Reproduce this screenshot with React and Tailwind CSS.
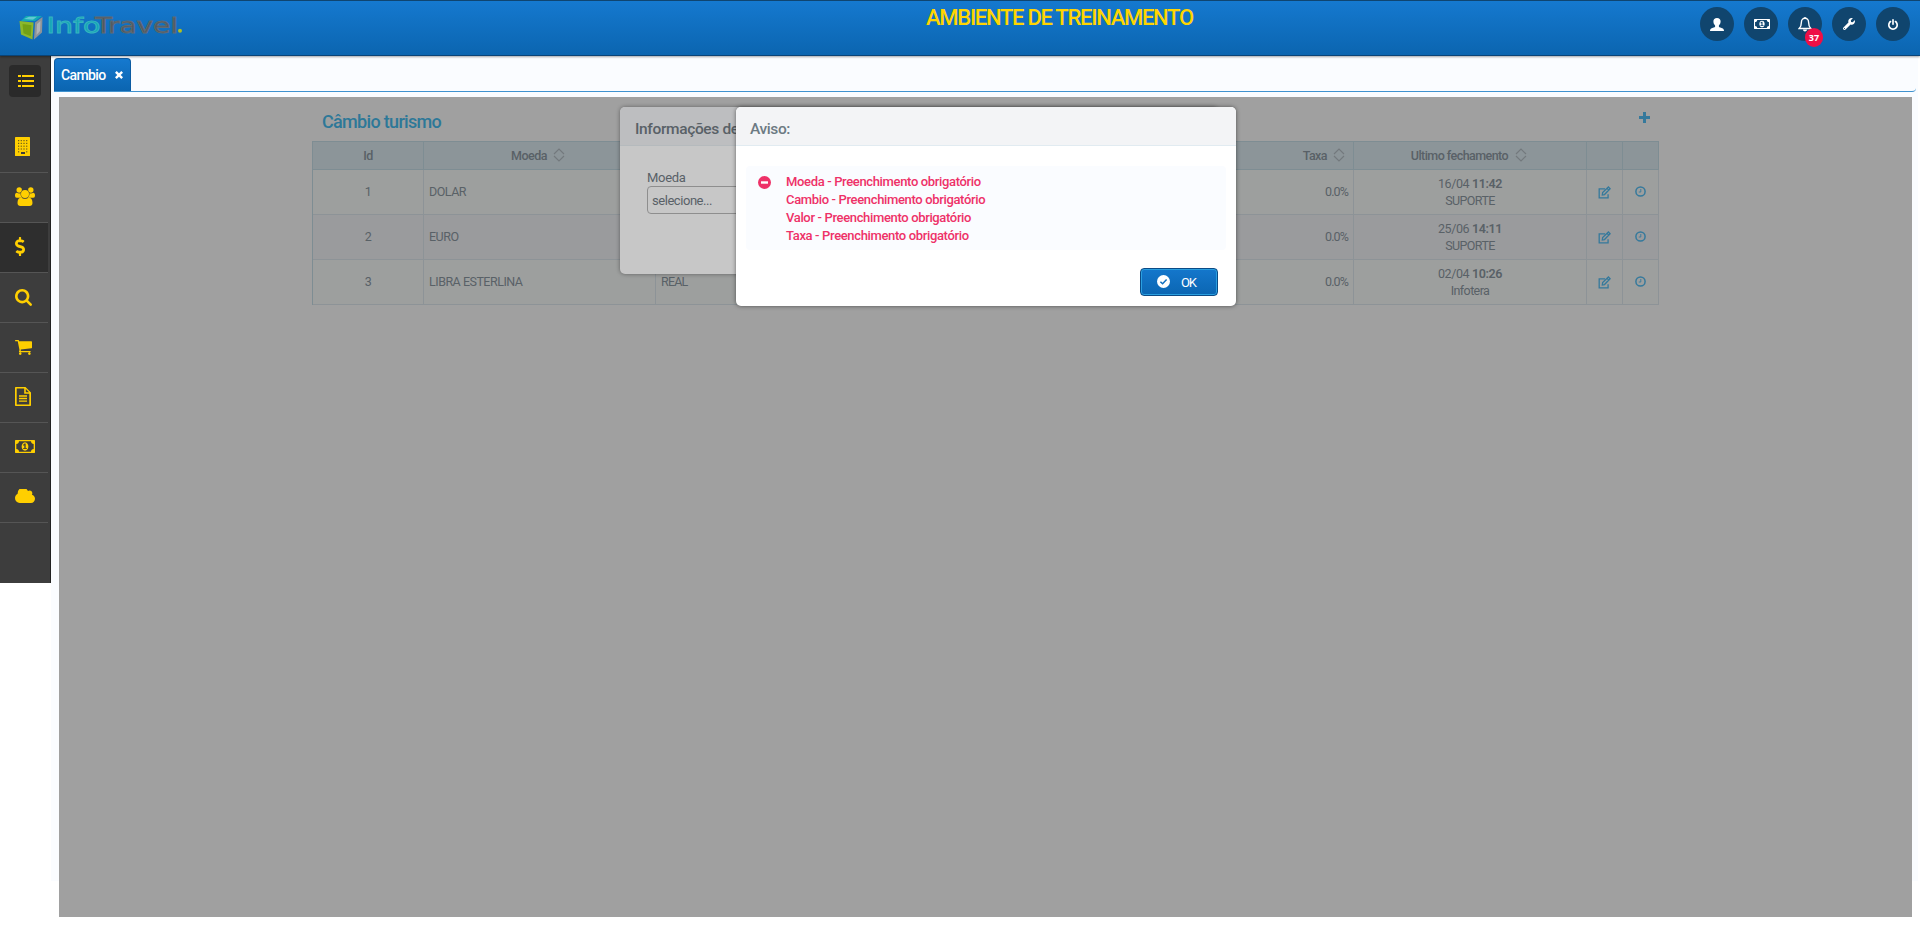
import React from "react";
import { FaDollarSign, FaWrench } from "react-icons/fa";

function Svg({ box, className, children, ...rest }) {
  return (
    <svg viewBox={box} className={className} fill="currentColor" preserveAspectRatio="none" {...rest}>
      {children}
    </svg>
  );
}

const MONEY =
  "M768 1152h384v-96h-128v-448h-114l-148 137 77 80q42-37 55-57h2v288h-128v96zm512-256q0 70-21 142t-59.5 134-101.5 101-138 39-138-39-101.5-101-59.5-134-21-142 21-142 59.5-134 101.5-101 138-39 138 39 101.5 101 59.5 134 21 142zm512 256v-512q-106 0-181-75t-75-181h-1152q0 106-75 181t-181 75v512q106 0 181 75t75 181h1152q0-106 75-181t181-75zm128-832v1152q0 26-19 45t-45 19h-1792q-26 0-45-19t-19-45v-1152q0-26 19-45t45-19h1792q26 0 45 19t19 45z";
const SEARCH =
  "M1216 832q0-185-131.5-316.5t-316.5-131.5-316.5 131.5-131.5 316.5 131.5 316.5 316.5 131.5 316.5-131.5 131.5-316.5zm512 832q0 52-38 90t-90 38q-54 0-90-38l-343-342q-179 124-399 124-143 0-273.5-55.5t-225-150-150-225-55.500-273.500 55.500-273.500 150-225 225-150 273.500-55.500 273.500 55.500 225 150 150 225 55.500 273.500q0 220-124 399l343 343q37 37 37 90z";
const CART =
  "M704 1536q0 52-38 90t-90 38-90-38-38-90 38-90 90-38 90 38 38 90zm896 0q0 52-38 90t-90 38-90-38-38-90 38-90 90-38 90 38 38 90zm128-1088v512q0 24-16.5 42.5t-40.5 21.5l-1044 122q13 60 13 70 0 16-24 64h920q26 0 45 19t19 45-19 45-45 19h-1024q-26 0-45-19t-19-45q0-11 8-31.5t16-36 21.5-40 15.5-29.5l-177-823h-204q-26 0-45-19t-19-45 19-45 45-19h256q16 0 28.5 6.5t19.5 15.5 13 24.5 8 26 5.5 29.5 4.5 26h1201q26 0 45 19t19 45z";
const CLOUD =
  "M1984 1152q0 159-112.5 271.5t-271.5 112.5h-1088q-185 0-316.5-131.5t-131.5-316.5q0-132 71-241.5t187-163.5q-2-28-2-43 0-212 150-362t362-150q158 0 286.5 88t187.5 230q70-62 166-62 106 0 181 75t75 181q0 75-41 138 129 30 213 134.5t84 239.5z";
const POWER =
  "M1664 896q0 156-61 298t-164 245-245 164-298 61-298-61-245-164-164-245-61-298q0-182 80.5-343t226.5-270q43-32 95.5-25t83.5 50q32 42 24.5 94.5t-49.5 84.5q-98 74-151.5 181t-53.5 228q0 104 40.5 198.5t109.5 163.5 163.5 109.5 198.5 40.5 198.5-40.5 163.5-109.5 109.5-163.5 40.5-198.5q0-121-53.5-228t-151.5-181q-42-32-49.5-84.5t24.5-94.5q31-43 84-50t95 25q146 109 226.5 270t80.5 343zm-640-768v640q0 52-38 90t-90 38-90-38-38-90v-640q0-52 38-90t90-38 90 38 38 90z";

function Building() {
  const dots = [];
  for (let r = 0; r < 5; r++) for (let c = 0; c < 4; c++) if (!(r === 4 && (c === 1 || c === 2))) dots.push([3 + c * 2.7, 3 + r * 2.8]);
  return (
    <Svg box="0 0 15 19" className="h-[19px] w-[15px]">
      <rect width="15" height="19" rx="0.6" />
      {dots.map(([x, y]) => (
        <rect key={x + "-" + y} x={x} y={y} width="1.2" height="1.2" fill="#6b5c1c" />
      ))}
      <rect x="6" y="15" width="4" height="2" fill="#3d3d3d" />
    </Svg>
  );
}

function Group() {
  return (
    <Svg box="0 0 20 19" className="h-[19px] w-[20px]">
      <circle cx="4.2" cy="3" r="2.7" />
      <circle cx="15.8" cy="3" r="2.7" />
      <path d="M0 8.2c0-1.700.8-2.600 1.900-2.500 1.300 1 2.900 1 4 .3.1 2 .5 3.400 1.500 4.700H1.700C.6 10.700 0 9.900 0 8.200z" />
      <path d="M20 8.200c0-1.700-.8-2.600-1.900-2.500-1.300 1-2.900 1-4 .3-.1 2-.5 3.400-1.500 4.700h5.700c1.100 0 1.700-.8 1.700-2.500z" />
      <circle cx="10" cy="6.900" r="4.500" fill="#3d3d3d" />
      <circle cx="10" cy="6.900" r="4" />
      <path d="M2.500 16c0-3.400 1.300-5.600 3.700-5.600 1.100.9 2.300 1.400 3.800 1.400s2.700-.5 3.800-1.400c2.400 0 3.700 2.200 3.700 5.600 0 1.900-1.200 3-2.900 3H5.400c-1.700 0-2.900-1.100-2.900-3z" />
    </Svg>
  );
}

function Doc() {
  return (
    <Svg box="0 0 16 19" className="h-[19px] w-[16px]">
      <path fillRule="evenodd" d="M1 0h9.500L16 5.500V18c0 .6-.4 1-1 1H1c-.6 0-1-.4-1-1V1c0-.6.4-1 1-1zm.7 1.600v15.800h12.600V6.800H9.200V1.600zm9.100.4v3.200H14z" />
      <path d="M4 8.200h8v1.500H4zM4 10.800h8v1.500H4zM4 13.400h8v1.400H4z" />
    </Svg>
  );
}

const MENU = [
  { id: "empresa", icon: <Building /> },
  { id: "clientes", icon: <Group /> },
  { id: "cambio", icon: <FaDollarSign className="mb-[1px] h-[19px] w-[10px]" preserveAspectRatio="none" />, active: true },
  { id: "busca", icon: <Svg box="64 128 1664 1664" className="mt-[1px] h-[17px] w-[17px]"><path d={SEARCH} /></Svg> },
  { id: "carrinho", icon: <Svg box="64 256 1664 1408" className="mt-[1px] h-[15px] w-[17px]"><path d={CART} /></Svg> },
  { id: "documento", icon: <Doc /> },
  { id: "financeiro", icon: <Svg box="0 256 1920 1280" className="h-[13px] w-[20px]"><path d={MONEY} /></Svg> },
  { id: "nuvem", icon: <Svg box="64 256 1920 1280" className="mb-[2px] h-[14px] w-[20px]"><path d={CLOUD} /></Svg> },
];

function Sidebar() {
  return (
    <aside className="h-[527px] w-[51px] shrink-0 border-r border-[#222] bg-[#3d3d3d] text-[#ffcf00]">
      <div className="pt-[9px] pl-[9px]">
        <button className="flex h-8 w-8 items-center justify-center rounded bg-[#2a2a2a] pl-[1px]">
          <Svg box="0 0 16 12" className="h-[12px] w-[16px]">
            <path d="M0 0h3v2H0zM4 0h12v2H4zM0 5h3v2H0zM4 5h12v2H4zM0 10h3v2H0zM4 10h12v2H4z" />
          </Svg>
        </button>
      </div>
      <nav className="mt-[26px] w-12">
        {MENU.map((m) => (
          <div
            key={m.id}
            className={
              "flex h-[50px] items-center border-b border-[#555] pb-[2px] pl-[15px] " + (m.active ? "bg-[#2e2e2e]" : "")
            }
          >
            {m.icon}
          </div>
        ))}
      </nav>
    </aside>
  );
}

function Logo() {
  return (
    <svg viewBox="0 0 170 32" className="h-8 w-[170px] overflow-visible">
      <path d="M7 1h16l-7 5H2z" fill="#12a9b4" />
      <path d="M5 4l5-2.200h8l-4 3z" fill="#62c9d2" />
      <path d="M0.500 6L14.500 7.500 13.500 24.500 2 19.500z" fill="#8cb82b" />
      <path d="M3.500 9l9 1.200-.7 11-7.300-3z" fill="#72a015" />
      <path d="M16 7.500L23.500 2 23 17.500 15 24.500z" fill="#8e9398" />
      <path d="M18 9l3.500-3-.5 10-3.500 4z" fill="#b0b4b8" />
      <text x="27.500" y="17.500" fontFamily="'DejaVu Sans', sans-serif" fontSize="21.500" fill="#12a5b5" stroke="#35b3bf" strokeWidth="0.900" textLength="54" lengthAdjust="spacingAndGlyphs">
        Info
      </text>
      <text x="76" y="17.500" fontFamily="'DejaVu Sans', sans-serif" fontSize="21.500" fill="#50565c" stroke="#5f6b75" strokeWidth="0.900" textLength="83" lengthAdjust="spacingAndGlyphs">
        Travel
      </text>
      <circle cx="161" cy="15.700" r="2" fill="#b0c020" />
    </svg>
  );
}

function RoundButton({ children }) {
  return (
    <button className="relative flex h-[34px] w-[34px] items-center justify-center rounded-full bg-[#10456e] text-white">
      {children}
    </button>
  );
}

function Header() {
  return (
    <header className="relative z-10 flex h-[56px] justify-between border-t border-b border-t-[#0f4570] border-b-[#0a4478] bg-linear-to-b from-[#1579cf] to-[#0b65b0] shadow-[0_1px_2px_rgba(0,0,0,0.35)]">
      <div className="flex w-[500px] pt-[14px] pl-[19px]">
        <Logo />
      </div>
      <div className="flex w-[880px] pt-[5px] pl-[406px] text-[22px] leading-[24px] font-medium tracking-[-1.280px] whitespace-nowrap text-[#ffd500]">
        AMBIENTE DE TREINAMENTO
      </div>
      <div className="flex w-[500px] justify-end gap-[10px] pt-[6px] pr-[10px]">
        <RoundButton>
          <Svg box="0 0 14 13" className="h-[13px] w-[14px]">
            <path d="M7 0c2.300 0 3.600 1.300 3.600 3.300 0 1.700-.6 3.300-1.700 4.100v1.400c.5.700 1.800 1 3.200 1.400 1.300.4 1.900 1.100 1.900 2.800H0c0-1.700.6-2.400 1.900-2.800 1.400-.4 2.700-.7 3.200-1.400V7.400C4 6.600 3.400 5 3.400 3.300 3.400 1.300 4.700 0 7 0z" />
          </Svg>
        </RoundButton>
        <RoundButton>
          <Svg box="0 256 1920 1280" className="ml-[1px] h-[10px] w-[16px]">
            <path d={MONEY} />
          </Svg>
        </RoundButton>
        <RoundButton>
          <Svg box="0 0 14 15" className="h-[15px] w-[14px]">
            <path
              d="M7 1.200c-2.200 0-3.600 1.700-3.600 4 0 3.200-.9 5-2.200 6.300h11.600c-1.300-1.300-2.200-3.100-2.200-6.300 0-2.300-1.400-4-3.600-4z"
              fill="none"
              stroke="currentColor"
              strokeWidth="1.400"
            />
            <path d="M6.300 0h1.400v1.500H6.300zM5 12.500h4c0 1.300-.9 2-2 2s-2-.7-2-2z" />
          </Svg>
          <span className="absolute top-[21px] left-[17px] flex h-[19px] w-[18px] items-center justify-center rounded-full bg-[#ee0f45] font-['Open_Sans',sans-serif] text-[9px] font-bold">
            37
          </span>
        </RoundButton>
        <RoundButton>
          <FaWrench className="h-[12px] w-[12px]" />
        </RoundButton>
        <RoundButton>
          <Svg box="128 0 1536 1664" className="h-[11px] w-[10px]">
            <path d={POWER} />
          </Svg>
        </RoundButton>
      </div>
    </header>
  );
}

function Sort() {
  return (
    <svg viewBox="0 0 12 14" className="mb-[4px] h-[14px] w-[12px]" fill="none" stroke="#73797d" strokeWidth="1.100">
      <path d="M1 6l5-5 5 5M1 8l5 5 5-5" />
    </svg>
  );
}

function Edit() {
  return (
    <svg viewBox="0 0 12 12" className="h-[13px] w-[13px]" fill="none" stroke="#35799c" strokeWidth="1.200">
      <path d="M6.500 2.600H1.100v8.300h8.200V7.500" />
      <path d="M4 8.200l.3-2.100L9.600.9l1.600 1.600L6 7.900zM8.300 2.200l1.600 1.600" />
    </svg>
  );
}

function Clock() {
  return (
    <svg viewBox="0 0 11 11" className="mt-[-1px] h-[11px] w-[11px]" fill="none" stroke="#35799c">
      <circle cx="5.500" cy="5.500" r="4.600" strokeWidth="1.500" />
      <path d="M5.800 3v3H3.800" strokeWidth="0.900" />
    </svg>
  );
}

const ROWS = [
  { id: 1, moeda: "DOLAR", data: "16/04", hora: "11:42", user: "SUPORTE" },
  { id: 2, moeda: "EURO", data: "25/06", hora: "14:11", user: "SUPORTE" },
  { id: 3, moeda: "LIBRA ESTERLINA", cambio: "REAL", data: "02/04", hora: "10:26", user: "Infotera" },
];
const COLS = "grid grid-cols-[111px_232px_232px_233px_233px_233px_36px_36px]";
const HEAD = "flex h-[28px] items-center border-r border-b border-[#7e8d93] pt-[2px]";
const CELL = "flex items-center border-r border-b border-[#8d9397]";

function RatesTable() {
  return (
    <section className="ml-[253px] w-[1347px] text-[12.5px] tracking-[-0.6px] text-[#596167]">
      <div className="flex h-[44px] justify-between pr-[9px] pl-[10px]">
        <h1 className="pt-[13px] text-[18px] leading-[24px] font-medium tracking-[-0.68px] text-[#2d7898]">Câmbio turismo</h1>
        <Svg box="0 0 11 11" className="mt-[15px] h-[11px] w-[11px] text-[#35799c]">
          <path d="M4 0h3v4h4v3H7v4H4V7H0V4h4z" />
        </Svg>
      </div>
      <div className="border-t border-l border-[#7e8d93]">
        <div className={COLS + " bg-[#8c9599] text-[12.5px] font-medium tracking-[-0.55px]"}>
          <div className={HEAD + " justify-center"}>Id</div>
          <div className={HEAD + " justify-center gap-[6px] pr-[3px]"}>Moeda <Sort /></div>
          <div className={HEAD} />
          <div className={HEAD} />
          <div className={HEAD + " justify-end gap-[6px] pr-[8px]"}>Taxa <Sort /></div>
          <div className={HEAD + " justify-center gap-[7px] pr-[2px]"}>Ultimo fechamento <Sort /></div>
          <div className={HEAD} />
          <div className={HEAD} />
        </div>
        {ROWS.map((r) => (
          <div key={r.id} className={COLS + " h-[45px] " + (r.id === 2 ? "bg-[#9a9b9d]" : "bg-[#9d9f9e]")}>
            <div className={CELL + " justify-center"}>{r.id}</div>
            <div className={CELL + " pl-[5px] tracking-[-0.5px]"}>{r.moeda}</div>
            <div className={CELL + " pl-[5px] tracking-[-0.8px]"}>{r.cambio}</div>
            <div className={CELL} />
            <div className={CELL + " justify-end pr-[5px] tracking-[-0.9px]"}>0.0%</div>
            <div className={CELL + " flex-col justify-center pb-[1px] leading-[17px]"}>
              <div className="tracking-[-0.38px]">
                {r.data} <b className="font-semibold">{r.hora}</b>
              </div>
              <div>{r.user}</div>
            </div>
            <div className={CELL + " justify-center"}><Edit /></div>
            <div className={CELL + " justify-center"}><Clock /></div>
          </div>
        ))}
      </div>
    </section>
  );
}

function InfoDialog() {
  return (
    <div className="absolute top-[107px] left-[620px] z-20 h-[167px] w-[598px] overflow-hidden rounded-[5px] bg-[#c7c7c7] text-[#596167] shadow-[0_0_4px_rgba(0,0,0,0.4)]">
      <div className="h-[39px] border-b border-[#b5babd] bg-[#bdbec0] pt-[11px] pl-[15px] text-[15.5px] leading-[22px] font-medium tracking-[-0.35px]">
        Informações de
      </div>
      <div className="pt-[23px] pr-[27px] pl-[27px]">
        <div className="text-[13px] leading-[17px] tracking-[-0.3px]">Moeda</div>
        <div className="flex h-[28px] items-center rounded-[4px] border border-[#8e8e8e] pt-[1px] pl-[4px] text-[13px] tracking-[-0.45px]">
          selecione...
        </div>
      </div>
    </div>
  );
}

const ERRORS = ["Moeda", "Cambio", "Valor", "Taxa"];

function AlertDialog() {
  return (
    <div className="absolute top-[107px] left-[736px] z-30 h-[199px] w-[500px] overflow-hidden rounded-[5px] bg-white shadow-[0_0_4px_rgba(0,0,0,0.5)]">
      <div className="h-[39px] border-b border-[#e1ebf1] bg-[#f3f4f6] pt-[11px] pl-[14px] text-[15.5px] leading-[22px] font-medium tracking-[-0.4px] text-[#6c7a83]">
        Aviso:
      </div>
      <div className="mx-[10px] mt-[20px] flex h-[84px] rounded-[4px] bg-[#fafcff] pt-[7px] pl-[12px] text-[#ee3168]">
        <svg viewBox="0 0 13 13" className="mt-[3px] h-[13px] w-[13px]">
          <circle cx="6.500" cy="6.500" r="6.500" fill="#ee3168" />
          <rect x="3" y="5.300" width="7" height="2.400" fill="#fff" />
        </svg>
        <ul className="ml-[15px] text-[13px] leading-[18px] font-medium tracking-[-0.350px]">
          {ERRORS.map((e) => (
            <li key={e}>{e} - Preenchimento obrigatório</li>
          ))}
        </ul>
      </div>
      <div className="mt-[18px] flex justify-end pr-[18px]">
        <button className="flex h-[28px] w-[78px] items-center rounded-[4px] border border-[#0b4b86] bg-linear-to-b from-[#1477cc] to-[#0b66b2] pl-[16px] text-[13px] text-white shadow-[inset_0_0_0_1px_#2a9fe0]">
          <svg viewBox="0 0 13 13" className="mb-[2px] h-[13px] w-[13px]">
            <circle cx="6.500" cy="6.500" r="6.500" fill="#fff" />
            <path d="M3.400 6.700l2.200 2.100 4-4.200" fill="none" stroke="#1270c0" strokeWidth="1.500" />
          </svg>
          <span className="mt-[1px] ml-[11px] tracking-[-1.100px]">OK</span>
        </button>
      </div>
    </div>
  );
}

export default function App() {
  return (
    <div className="relative h-[930px] w-[1920px] overflow-hidden bg-white font-[Roboto,'Liberation_Sans',sans-serif]">
      <Header />
      <div className="flex">
        <Sidebar />
        <main className="h-[825px] w-[1867px] bg-[#fafcff] pt-[2px] pl-[3px]">
          <div className="mr-[2px] flex h-[34px] rounded-br-[4px] border-b border-[#3f92cf]">
            <div className="flex h-[33px] w-[77px] items-center rounded-t-[4px] border border-b-0 border-[#0b5ba2] bg-linear-to-b from-[#1579cf] to-[#0b65b0] pt-[1px] pl-[6px] text-[14px] font-medium tracking-[-0.6px] text-white">
              Cambio
              <Svg box="0 0 8 8" className="mb-[2px] ml-[9px] h-[8px] w-[8px]">
                <path d="M0 1.700L1.700 0 4 2.300 6.300 0 8 1.700 5.700 4 8 6.300 6.300 8 4 5.700 1.700 8 0 6.300 2.300 4z" />
              </Svg>
            </div>
          </div>
          <div className="mt-[5px] ml-[5px] h-[820px] w-[1853px] bg-[#a0a0a0]">
            <RatesTable />
          </div>
        </main>
      </div>
      <InfoDialog />
      <AlertDialog />
    </div>
  );
}
